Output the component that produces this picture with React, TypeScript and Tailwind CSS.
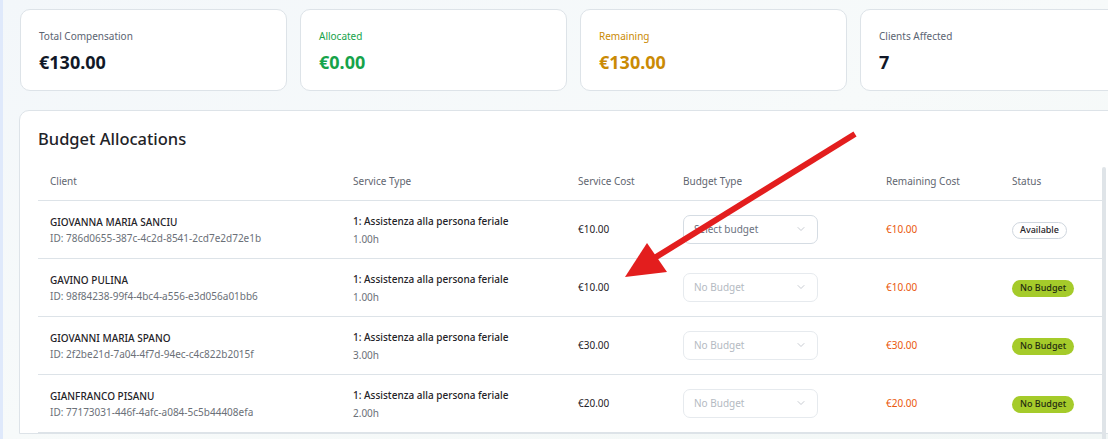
import React from 'react'
import { ChevronDown } from 'lucide-react'

type Row = {
  name: string
  id: string
  hours: string
  cost: string
  placeholder: string
  enabled: boolean
  status: 'available' | 'none'
}

const rows: Row[] = [
  { name: 'GIOVANNA MARIA SANCIU', id: '786d0655-387c-4c2d-8541-2cd7e2d72e1b', hours: '1.00h', cost: '€10.00', placeholder: 'Select budget', enabled: true, status: 'available' },
  { name: 'GAVINO PULINA', id: '98f84238-99f4-4bc4-a556-e3d056a01bb6', hours: '1.00h', cost: '€10.00', placeholder: 'No Budget', enabled: false, status: 'none' },
  { name: 'GIOVANNI MARIA SPANO', id: '2f2be21d-7a04-4f7d-94ec-c4c822b2015f', hours: '3.00h', cost: '€30.00', placeholder: 'No Budget', enabled: false, status: 'none' },
  { name: 'GIANFRANCO PISANU', id: '77173031-446f-4afc-a084-5c5b44408efa', hours: '2.00h', cost: '€20.00', placeholder: 'No Budget', enabled: false, status: 'none' },
]

const StatCard = ({ label, value, tone }: { label: string; value: string; tone: string }) => (
  <div className="w-[267px] shrink-0 rounded-[10px] border border-[#dde3e8] bg-white px-[18px] pt-[18px] pb-[14px]">
    <div className={`text-[10px] leading-4 ${tone === 'green' ? 'text-[#16a34a]' : tone === 'amber' ? 'text-[#ca8a04]' : 'text-[#5b6472]'}`}>
      {label}
    </div>
    <div className={`mt-1 text-[18px] leading-7 font-bold ${tone === 'green' ? 'text-[#16a34a]' : tone === 'amber' ? 'text-[#ca8a04]' : 'text-[#111827]'}`}>
      {value}
    </div>
  </div>
)

const App = () => {
  return (
    <div
      className="relative h-[439px] w-[1108px] overflow-hidden bg-gradient-to-br from-[#f3f7fa] via-[#f7fafa] to-[#f2f7f6] pt-[9px] pl-[20px]"
      style={{ fontFamily: '"Noto Sans", "Open Sans", sans-serif' }}
    >
      {/* left edge tint */}
      <div className="absolute top-0 left-0 h-full w-[3px] bg-[#dfe9fb]" />

      <div className="flex w-[1130px] gap-[13px]">
        <StatCard label="Total Compensation" value="€130.00" tone="gray" />
        <StatCard label="Allocated" value="€0.00" tone="green" />
        <StatCard label="Remaining" value="€130.00" tone="amber" />
        <StatCard label="Clients Affected" value="7" tone="gray" />
      </div>

      <div className="mt-[19px] ml-[-1px] w-[1110px] rounded-tl-[10px] border border-[#dde3e8] bg-white pt-[14px] pl-[18px]">
        <h2 className="text-[16.5px] leading-7 font-medium text-[#1f2328]">Budget Allocations</h2>

        <table className="mt-[6px] w-[1064px] table-fixed border-collapse text-[10px]">
          <colgroup>
            <col className="w-[303px]" />
            <col className="w-[225px]" />
            <col className="w-[105px]" />
            <col className="w-[203px]" />
            <col className="w-[126px]" />
            <col />
          </colgroup>
          <thead>
            <tr className="h-[41px] border-b border-[#dde3e8] text-left text-[#5f6670]">
              <th className="px-3 pt-[5px] font-normal">Client</th>
              <th className="px-3 pt-[5px] font-normal">Service Type</th>
              <th className="px-3 pt-[5px] font-normal">Service Cost</th>
              <th className="px-3 pt-[5px] font-normal">Budget Type</th>
              <th className="px-3 pt-[5px] font-normal">Remaining Cost</th>
              <th className="px-3 pt-[5px] font-normal">Status</th>
            </tr>
          </thead>
          <tbody>
            {rows.map((r) => (
              <tr key={r.id} className="h-[58px] border-b border-[#dde3e8]">
                <td className="px-3 pt-[1px]">
                  <div className="leading-4 font-medium text-[#1f2328]">{r.name}</div>
                  <div className="leading-4 text-[#6b7078]">ID: {r.id}</div>
                </td>
                <td className="px-3 pt-[1px]">
                  <div className="leading-4 font-medium text-[#1f2328]">1: Assistenza alla persona feriale</div>
                  <div className="mt-[2px] leading-4 text-[#6b7078]">{r.hours}</div>
                </td>
                <td className="px-3 text-[#1f2328]">{r.cost}</td>
                <td className="px-3">
                  <div
                    className={`flex h-[29px] w-[135px] items-center justify-between rounded-[7px] border px-[10px] ${
                      r.enabled ? 'border-[#d5dce3] text-[#6b7280]' : 'border-[#e6eaee] text-[#b4bac2]'
                    }`}
                  >
                    <span>{r.placeholder}</span>
                    <ChevronDown className="h-3 w-3 text-[#b4bac2]" strokeWidth={1.5} />
                  </div>
                </td>
                <td className="px-3 text-[#ea580c]">{r.cost}</td>
                <td className="px-3 pt-[2px]">
                  {r.status === 'available' ? (
                    <span className="inline-flex h-[17px] items-center rounded-full border border-[#cfd6de] bg-white px-[7px] text-[9px] font-medium text-[#1f2328]">
                      Available
                    </span>
                  ) : (
                    <span className="inline-flex h-[17px] items-center rounded-full bg-[#a5cb2a] px-[8px] text-[9px] font-medium text-[#1f2a10]">
                      No Budget
                    </span>
                  )}
                </td>
              </tr>
            ))}
          </tbody>
        </table>
      </div>

      {/* scrollbar track */}
      <div className="absolute top-[167px] left-[1102px] h-[272px] w-[4px] rounded-t-sm bg-[#dfe4e8]" />

      {/* red annotation arrow */}
      <svg className="pointer-events-none absolute top-0 left-0" width="1108" height="439">
        <line x1="855" y1="134" x2="648" y2="262" stroke="#e31e1e" strokeWidth="6" strokeLinecap="butt" />
        <polygon points="625,277 647,243 667,272" fill="#e31e1e" />
      </svg>
    </div>
  )
}

export default App
